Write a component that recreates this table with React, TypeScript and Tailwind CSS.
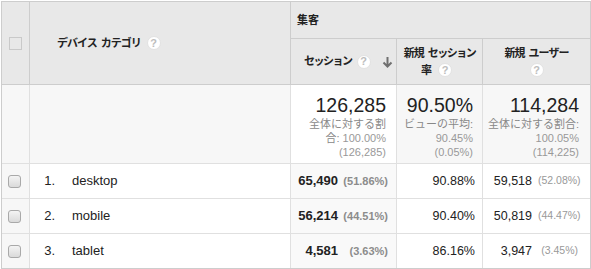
import * as React from "react";

const font = { fontFamily: '"Liberation Sans", "Noto Sans CJK JP", sans-serif' };

function Help({ className = "" }: { className?: string }) {
  return (
    <span
      className={
        "inline-flex h-[14px] w-[14px] items-center justify-center rounded-full border border-[#e2e2e2] bg-white text-[11px] font-bold leading-none tracking-normal text-[#bdbdbd] " +
        className
      }
    >
      ?
    </span>
  );
}

function Check() {
  return (
    <span className="block h-[13px] w-[13px] rounded-[3px] border border-[#a9a9a9] bg-gradient-to-b from-[#f4f4f4] to-[#dadada]" />
  );
}

const rows = [
  { n: "1.", name: "desktop", s: "65,490", sp: "(51.86%)", r: "90.88%", u: "59,518", up: "(52.08%)" },
  { n: "2.", name: "mobile", s: "56,214", sp: "(44.51%)", r: "90.40%", u: "50,819", up: "(44.47%)" },
  { n: "3.", name: "tablet", s: "4,581", sp: "(3.63%)", r: "86.16%", u: "3,947", up: "(3.45%)" },
];

export default function App() {
  return (
    <div className="h-[269px] w-[591px] bg-white pl-px pt-px" style={font}>
      <div className="grid w-[590px] grid-cols-[28px_261px_106px_86px_107px] grid-rows-[37px_46px_79px_35px_35px_34px] border border-[#cdcdcd] text-[#222]">
        {/* header */}
        <div className="row-span-2 flex items-center border-b border-r border-[#cdcdcd] bg-[#e8e8e8] pl-[7px]">
          <span className="block h-[13px] w-[13px] border border-[#c9c9c9]" />
        </div>
        <div className="row-span-2 flex items-center border-b border-r border-[#cdcdcd] bg-[#e8e8e8] pl-[27px] text-[11px] font-bold">
          <span className="tracking-[-1px]">デバイス</span>
          <span className="ml-[4px] tracking-[-1px]">カテゴリ</span>
          <Help className="ml-[6px]" />
        </div>
        <div className="col-span-3 flex items-center border-b border-[#cdcdcd] bg-[#e8e8e8] pl-[6px] text-[11px] font-bold">
          集客
        </div>
        <div className="flex items-center border-b border-r border-[#cdcdcd] bg-[#e8e8e8] pl-[13px] pr-[3px] text-[11px] font-bold">
          <span className="tracking-[-1.5px]">セッション</span>
          <Help className="ml-[5px]" />
          <svg className="ml-auto" width="11" height="12" viewBox="0 0 11 12">
            <path d="M5.5 1v9M1.5 6.5l4 4 4-4" fill="none" stroke="#707070" strokeWidth="2" />
          </svg>
        </div>
        <div className="flex flex-col items-center justify-center border-b border-r border-[#cdcdcd] bg-[#e8e8e8] text-[11px] font-bold leading-[17px]">
          <span className="flex">
            <span className="tracking-[-1px]">新規</span>
            <span className="ml-[4px] tracking-[-1.5px]">セッション</span>
          </span>
          <span className="flex items-center gap-[6px] pr-[6px]">
            率 <Help />
          </span>
        </div>
        <div className="flex flex-col items-center justify-center border-b border-[#cdcdcd] bg-[#e8e8e8] text-[11px] font-bold leading-[17px]">
          <span className="flex">
            <span className="tracking-[-1px]">新規</span>
            <span className="ml-[4px] tracking-[-1px]">ユーザー</span>
          </span>
          <span className="flex h-[17px] items-center">
            <Help />
          </span>
        </div>

        {/* summary */}
        <div className="border-b border-r border-[#e0e0e0] bg-[#f7f7f7]" />
        <div className="border-b border-r border-[#e0e0e0] bg-[#f7f7f7]" />
        <div className="flex flex-col items-end border-b border-r border-[#e0e0e0] bg-white pr-[10px] pt-[8px] text-right">
          <span className="text-[19.5px] leading-[24px] text-[#222]">126,285</span>
          <span className="text-[11px] leading-[14px] text-[#888]">全体に対する割</span>
          <span className="text-[11px] leading-[14px] text-[#888]">
            合: <span className="text-[#999]">100.00%</span>
          </span>
          <span className="text-[11px] leading-[14px] text-[#999]">(126,285)</span>
        </div>
        <div className="flex flex-col items-end border-b border-r border-[#e0e0e0] bg-[#f7f7f7] pr-[9px] pt-[8px] text-right">
          <span className="text-[19.5px] leading-[24px] text-[#222]">90.50%</span>
          <span className="text-[11px] leading-[14px] text-[#888]">ビューの平均:</span>
          <span className="text-[11px] leading-[14px] text-[#999]">90.45%</span>
          <span className="text-[11px] leading-[14px] text-[#999]">(0.05%)</span>
        </div>
        <div className="flex flex-col items-end border-b border-[#e0e0e0] bg-[#f7f7f7] pr-[11px] pt-[8px] text-right">
          <span className="text-[19.5px] leading-[24px] text-[#222]">114,284</span>
          <span className="text-[11px] leading-[14px] text-[#888]">全体に対する割合:</span>
          <span className="text-[11px] leading-[14px] text-[#999]">100.05%</span>
          <span className="text-[11px] leading-[14px] text-[#999]">(114,225)</span>
        </div>

        {/* data rows */}
        {rows.map((row, i) => {
          const b = i < rows.length - 1 ? "border-b " : "";
          return (
            <React.Fragment key={row.n}>
              <div className={b + "flex items-center border-r border-[#e0e0e0] bg-[#f7f7f7] pl-[6px]"}>
                <Check />
              </div>
              <div className={b + "flex items-center border-r border-[#e0e0e0] bg-white text-[13px]"}>
                <span className="w-[25px] text-right">{row.n}</span>
                <span className="pl-[17px]">{row.name}</span>
              </div>
              <div className={b + "flex items-center justify-end gap-[5px] border-r border-[#e0e0e0] bg-[#f9f9f9] pr-[8px]"}>
                <span className="text-[13px] font-bold">{row.s}</span>
                <span className="w-[45px] text-right text-[11px] font-bold text-[#8c8c8c]">{row.sp}</span>
              </div>
              <div className={b + "flex items-center justify-end border-r border-[#e0e0e0] bg-white pr-[7px] text-[12.5px]"}>
                {row.r}
              </div>
              <div className={b + "flex items-center justify-end gap-[6px] border-[#e0e0e0] bg-white pr-[12px]"}>
                <span className="text-[12.5px]">{row.u}</span>
                <span className="w-[40px] text-right text-[10.5px] text-[#999]">{row.up}</span>
              </div>
            </React.Fragment>
          );
        })}
      </div>
    </div>
  );
}
